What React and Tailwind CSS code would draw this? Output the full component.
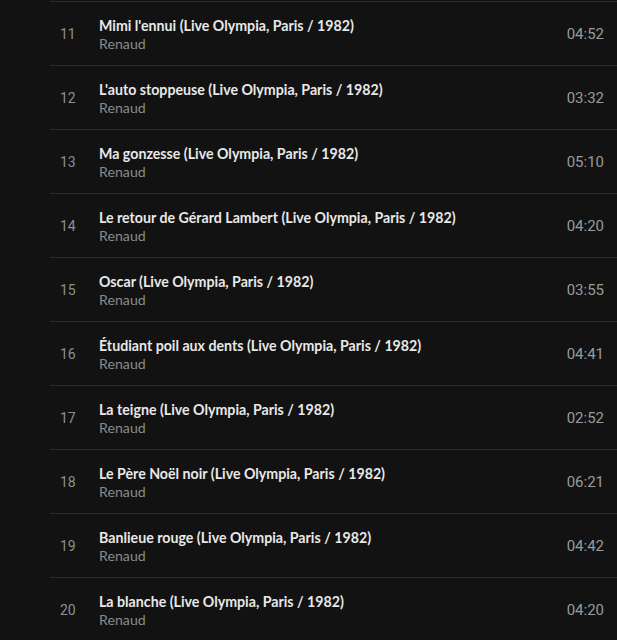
import React from 'react';

const tracks = [
  { n: 11, title: "Mimi l'ennui (Live Olympia, Paris / 1982)", time: '04:52' },
  { n: 12, title: "L'auto stoppeuse (Live Olympia, Paris / 1982)", time: '03:32' },
  { n: 13, title: 'Ma gonzesse (Live Olympia, Paris / 1982)', time: '05:10' },
  { n: 14, title: 'Le retour de Gérard Lambert (Live Olympia, Paris / 1982)', time: '04:20' },
  { n: 15, title: 'Oscar (Live Olympia, Paris / 1982)', time: '03:55' },
  { n: 16, title: 'Étudiant poil aux dents (Live Olympia, Paris / 1982)', time: '04:41' },
  { n: 17, title: 'La teigne (Live Olympia, Paris / 1982)', time: '02:52' },
  { n: 18, title: 'Le Père Noël noir (Live Olympia, Paris / 1982)', time: '06:21' },
  { n: 19, title: 'Banlieue rouge (Live Olympia, Paris / 1982)', time: '04:42' },
  { n: 20, title: 'La blanche (Live Olympia, Paris / 1982)', time: '04:20' },
];

const App = () => {
  return (
    <div className="min-h-screen w-full bg-[#121212] overflow-hidden">
      <ul className="pl-[50px] pt-px">
        {tracks.map((t) => (
          <li key={t.n} className="h-16 pt-[2px] border-t border-[#2a2a2a] flex items-center">
            <span className="w-[49px] pl-[10px] text-[14px] text-[#8f8f8f] font-['Roboto',sans-serif]">
              {t.n}
            </span>
            <div className="flex-1 min-w-0 flex flex-col leading-[18px] font-['Lato',sans-serif]">
              <span className="text-[14.2px] font-bold text-[#e8e8e8] truncate">{t.title}</span>
              <span className="text-[14.2px] text-[#8a8a8a]">Renaud</span>
            </div>
            <span className="pr-[13px] text-[15px] text-[#9a9a9a] font-['Roboto',sans-serif]">
              {t.time}
            </span>
          </li>
        ))}
      </ul>
    </div>
  );
};

export default App;
